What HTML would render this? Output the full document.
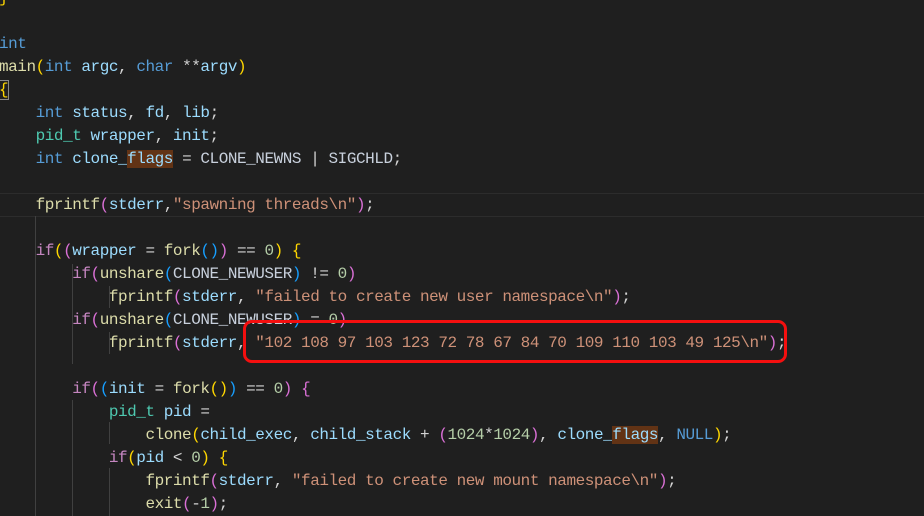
<!DOCTYPE html>
<html><head><style>
body{margin:0;width:924px;height:516px;background:#1f1f1f;overflow:hidden;position:relative;}
#c{position:absolute;left:-1px;top:-13px;font-family:"Liberation Mono",monospace;font-size:16px;letter-spacing:-0.45px;line-height:23px;color:#d4d4d4;white-space:pre;}
.k{color:#569cd6}.t{color:#4ec9b0}.v{color:#9cdcfe}.f{color:#dcdcaa}.s{color:#ce9178}.n{color:#b5cea8}
.c{color:#c586c0}.m{color:#c8d0dc}.y{color:#ffd700}.p{color:#da70d6}.b{color:#179fff}
.hl{background:#623315}
.g{position:absolute;width:1px;background:#404040}
</style></head><body>
<div style="position:absolute;left:0;top:193px;width:924px;height:22px;border-top:1px solid #2c2c2c;border-bottom:1px solid #2c2c2c"></div>
<div class="g" style="left:35px;top:216px;height:300px"></div>
<div class="g" style="left:72px;top:264px;height:100px"></div>
<div class="g" style="left:109px;top:286px;height:22px"></div>
<div class="g" style="left:109px;top:332px;height:22px"></div>
<div class="g" style="left:72px;top:400px;height:116px"></div>
<div class="g" style="left:109px;top:422px;height:22px"></div>
<div class="g" style="left:109px;top:468px;height:48px"></div>
<div id="c"><span class="y">}</span>

<span class="k">int</span>
<span class="f">main</span><span class="y">(</span><span class="k">int</span> <span class="v">argc</span>, <span class="k">char</span> **<span class="v">argv</span><span class="y">)</span>
<span class="y" style="outline:1px solid #888">{</span>
    <span class="k">int</span> <span class="v">status</span>, <span class="v">fd</span>, <span class="v">lib</span>;
    <span class="t">pid_t</span> <span class="v">wrapper</span>, <span class="v">init</span>;
    <span class="k">int</span> <span class="v">clone_<span class="hl">flags</span></span> = <span class="m">CLONE_NEWNS</span> | <span class="m">SIGCHLD</span>;

    <span class="f">fprintf</span><span class="p">(</span><span class="v">stderr</span>,<span class="s">"spawning threads\n"</span><span class="p">)</span>;

    <span class="c">if</span><span class="y">(</span><span class="p">(</span><span class="v">wrapper</span> = <span class="f">fork</span><span class="b">()</span><span class="p">)</span> == <span class="n">0</span><span class="y">)</span> <span class="y">{</span>
        <span class="c">if</span><span class="p">(</span><span class="f">unshare</span><span class="b">(</span><span class="m">CLONE_NEWUSER</span><span class="b">)</span> != <span class="n">0</span><span class="p">)</span>
            <span class="f">fprintf</span><span class="p">(</span><span class="v">stderr</span>, <span class="s">"failed to create new user namespace\n"</span><span class="p">)</span>;
        <span class="c">if</span><span class="p">(</span><span class="f">unshare</span><span class="b">(</span><span class="m">CLONE_NEWUSER</span><span class="b">)</span> = <span class="n">0</span><span class="p">)</span>
            <span class="f">fprintf</span><span class="p">(</span><span class="v">stderr</span>, <span class="s">"102 108 97 103 123 72 78 67 84 70 109 110 103 49 125\n"</span><span class="p">)</span>;

        <span class="c">if</span><span class="p">(</span><span class="b">(</span><span class="v">init</span> = <span class="f">fork</span><span class="y">()</span><span class="b">)</span> == <span class="n">0</span><span class="p">)</span> <span class="p">{</span>
            <span class="t">pid_t</span> <span class="v">pid</span> =
                <span class="f">clone</span><span class="y">(</span><span class="v">child_exec</span>, <span class="v">child_stack</span> + <span class="p">(</span><span class="n">1024</span>*<span class="n">1024</span><span class="p">)</span>, <span class="v">clone_<span class="hl">flags</span></span>, <span class="k">NULL</span><span class="y">)</span>;
            <span class="c">if</span><span class="y">(</span><span class="v">pid</span> &lt; <span class="n">0</span><span class="y">)</span> <span class="y">{</span>
                <span class="f">fprintf</span><span class="p">(</span><span class="v">stderr</span>, <span class="s">"failed to create new mount namespace\n"</span><span class="p">)</span>;
                <span class="f">exit</span><span class="p">(</span>-<span class="n">1</span><span class="p">)</span>;
</div>
<div style="position:absolute;left:243px;top:320px;width:538px;height:37px;border:3px solid #f40f0f;border-radius:9px"></div>
</body></html>
